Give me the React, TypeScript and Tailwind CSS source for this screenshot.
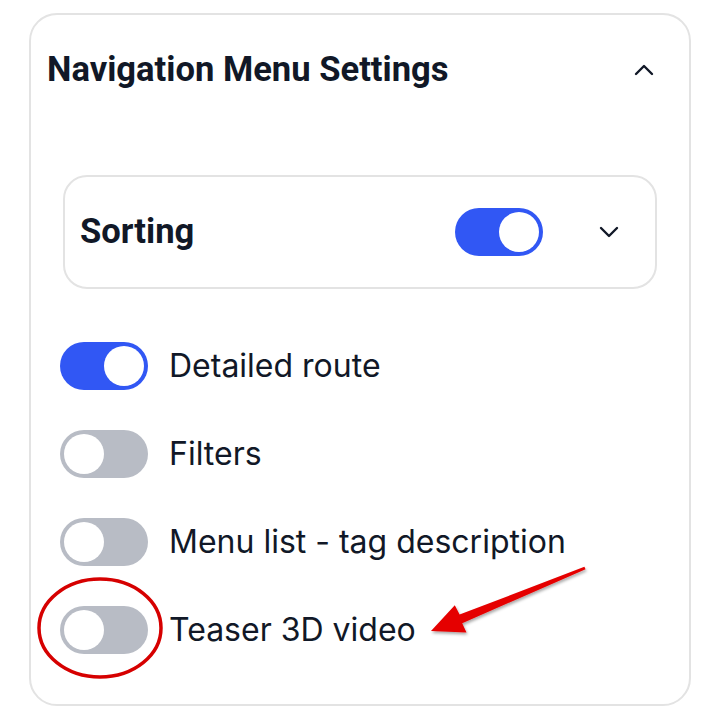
import * as React from "react";

type Row = { label: string; on: boolean };

const rows: Row[] = [
  { label: "Detailed route", on: true },
  { label: "Filters", on: false },
  { label: "Menu list - tag description", on: false },
  { label: "Teaser 3D video", on: false },
];

function Toggle({ on }: { on: boolean }) {
  return (
    <div
      className={`flex h-[48px] w-[88px] shrink-0 items-center rounded-full p-[4px] ${
        on ? "justify-end bg-[#3157f4]" : "justify-start bg-[#b8bcc5]"
      }`}
    >
      <div className="h-[40px] w-[40px] rounded-full bg-white" />
    </div>
  );
}

function Chevron({ up }: { up?: boolean }) {
  return (
    <svg width="20" height="12" viewBox="0 0 20 12" fill="none">
      <path
        d={up ? "M2 10 L10 2 L18 10" : "M2 2 L10 10 L18 2"}
        stroke="#111827"
        strokeWidth="2.4"
        strokeLinecap="round"
        strokeLinejoin="round"
      />
    </svg>
  );
}

export default function App() {
  return (
    <div
      className="relative h-[722px] w-[716px] bg-white text-[#111827]"
      style={{ fontFamily: "Inter, 'Noto Sans', sans-serif" }}
    >
      <div className="ml-[29px] pt-[13px]">
        <div className="h-[693px] w-[662px] rounded-[28px] border-2 border-[#e3e3e3]">
          {/* header */}
          <div className="flex h-[110px] items-center justify-between pl-[16px] pr-[35px]">
            <div className="font-['Roboto',sans-serif] text-[34.6px] font-bold">Navigation Menu Settings</div>
            <Chevron up />
          </div>

          {/* Sorting card */}
          <div className="ml-[32px] mt-[50px] flex h-[114px] w-[594px] items-center rounded-[24px] border-2 border-[#e3e3e3] pl-[15px] pr-[36px]">
            <div className="flex-1 font-['Roboto',sans-serif] text-[34.6px] font-bold">Sorting</div>
            <Toggle on />
            <div className="ml-[56px]">
              <Chevron />
            </div>
          </div>

          {/* rows */}
          <div className="ml-[29px] mt-[33px] flex flex-col">
            {rows.map((r) => (
              <div key={r.label} className="flex h-[88px] items-center gap-[21px]">
                <Toggle on={r.on} />
                <div className="text-[32px]">{r.label}</div>
              </div>
            ))}
          </div>
        </div>
      </div>

      {/* annotation overlay */}
      <svg
        className="pointer-events-none absolute left-0 top-0"
        width="716"
        height="722"
        viewBox="0 0 716 722"
      >
        <defs>
          <filter id="sh" x="-10%" y="-10%" width="120%" height="130%">
            <feDropShadow dx="1" dy="2" stdDeviation="1.5" floodColor="#000" floodOpacity="0.35" />
          </filter>
        </defs>
        <ellipse cx="100" cy="628" rx="61" ry="49" fill="none" stroke="#d60000" strokeWidth="3.5" />
        <polygon
          filter="url(#sh)"
          fill="#e50000"
          points="584.4,566.8 459.6,614.6 454.8,605.2 431,631 466.5,632.5 462.2,623.2 585.6,569.2"
        />
      </svg>
    </div>
  );
}
